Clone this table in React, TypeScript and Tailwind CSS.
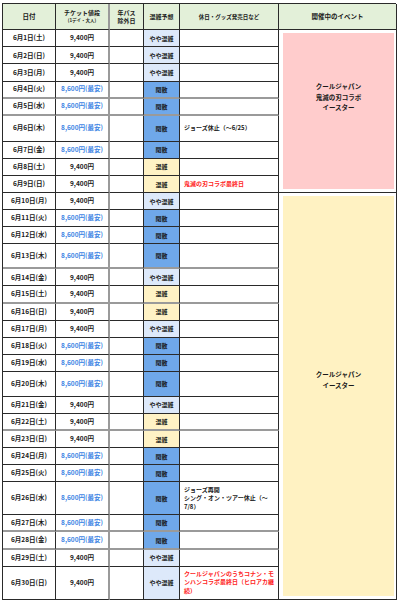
type Crowd = "ya" | "kan" | "kon";

type Day = {
  date: string;
  cheap: boolean;
  crowd: Crowd;
  note?: string[];
  red?: boolean;
  gray?: boolean;
};

const days: Day[] = [
  { date: "6月1日(土)", cheap: false, crowd: "ya" },
  { date: "6月2日(日)", cheap: false, crowd: "ya" },
  { date: "6月3日(月)", cheap: false, crowd: "ya" },
  { date: "6月4日(火)", cheap: true, crowd: "kan", gray: true },
  { date: "6月5日(水)", cheap: true, crowd: "kan", gray: true },
  { date: "6月6日(木)", cheap: true, crowd: "kan", note: ["ジョーズ休止（〜6/25）"] },
  { date: "6月7日(金)", cheap: true, crowd: "kan" },
  { date: "6月8日(土)", cheap: false, crowd: "kon" },
  { date: "6月9日(日)", cheap: false, crowd: "kon", note: ["鬼滅の刃コラボ最終日"], red: true },
  { date: "6月10日(月)", cheap: false, crowd: "ya" },
  { date: "6月11日(火)", cheap: true, crowd: "kan" },
  { date: "6月12日(水)", cheap: true, crowd: "kan" },
  { date: "6月13日(木)", cheap: true, crowd: "kan", gray: true },
  { date: "6月14日(金)", cheap: false, crowd: "ya" },
  { date: "6月15日(土)", cheap: false, crowd: "kon", gray: true },
  { date: "6月16日(日)", cheap: false, crowd: "kon" },
  { date: "6月17日(月)", cheap: false, crowd: "ya" },
  { date: "6月18日(火)", cheap: true, crowd: "kan" },
  { date: "6月19日(水)", cheap: true, crowd: "kan" },
  { date: "6月20日(木)", cheap: true, crowd: "kan" },
  { date: "6月21日(金)", cheap: false, crowd: "ya" },
  { date: "6月22日(土)", cheap: false, crowd: "kon", gray: true },
  { date: "6月23日(日)", cheap: false, crowd: "kon" },
  { date: "6月24日(月)", cheap: true, crowd: "kan" },
  { date: "6月25日(火)", cheap: true, crowd: "kan" },
  {
    date: "6月26日(水)",
    cheap: true,
    crowd: "kan",
    note: ["ジョーズ再開", "シング・オン・ツアー休止（〜", "7/8）"],
  },
  { date: "6月27日(木)", cheap: true, crowd: "kan", gray: true },
  { date: "6月28日(金)", cheap: true, crowd: "kan", gray: true },
  { date: "6月29日(土)", cheap: false, crowd: "ya" },
  {
    date: "6月30日(日)",
    cheap: false,
    crowd: "ya",
    note: ["クールジャパンのうちコナン・モ", "ンハンコラボ最終日（ヒロアカ継", "続）"],
    red: true,
  },
];

const crowdStyle: Record<Crowd, { label: string; cls: string }> = {
  ya: { label: "やや混雑", cls: "bg-[#dde9fa]" },
  kan: { label: "閑散", cls: "bg-[#6fa8ea]" },
  kon: { label: "混雑", cls: "bg-[#fff2c5]" },
};

function Row({ d }: { d: Day }) {
  const line = d.gray ? "border-b-2 border-b-[#9a9a9a]" : "border-b border-b-[#2a2a2a]";
  const crowd = crowdStyle[d.crowd];
  return (
    <>
      <div className={`flex items-center justify-center border-r border-r-[#2a2a2a] text-[6.5px] ${line}`}>
        {d.date}
      </div>
      <div
        className={`flex items-center justify-center border-r-2 border-r-[#9a9a9a] text-[6.5px] ${line} ${
          d.cheap ? "text-[#3f86e4]" : "text-[#1a1a1a]"
        }`}
      >
        {d.cheap ? "8,600円(最安)" : "9,400円"}
      </div>
      <div className={`border-r border-r-[#2a2a2a] ${line}`} />
      <div
        className={`flex items-center justify-center border-r border-r-[#2a2a2a] text-[6px] ${line} ${crowd.cls}`}
      >
        {crowd.label}
      </div>
      <div
        className={`flex flex-col justify-center border-r border-r-[#2a2a2a] pl-[4px] text-[6px] leading-[8.5px] ${line} ${
          d.red ? "text-[#ff2424]" : "text-[#1a1a1a]"
        }`}
      >
        {d.note?.map((t) => (
          <span key={t} className="whitespace-nowrap">
            {t}
          </span>
        ))}
      </div>
    </>
  );
}

export default function App() {
  return (
    <div className="h-[605px] w-[400px] bg-white pl-[2px] pt-[3px] font-['Noto_Sans_CJK_JP','Noto_Sans',sans-serif] font-bold text-[#1a1a1a]">
      <div className="grid w-[394px] grid-cols-[53px_54px_34px_36px_99px_118px] grid-rows-[26.3px_repeat(5,17.1px)_26px_repeat(6,17.1px)_25px_repeat(6,17.1px)_25px_repeat(5,17.1px)_33px_repeat(3,17.1px)_33px] border-l border-t border-[#2a2a2a]">
        {/* header */}
        <div className="flex items-center justify-center border-b border-r border-[#2a2a2a] bg-[#e3f0d9] text-[6.5px]">
          日付
        </div>
        <div className="flex flex-col items-center justify-center gap-[2px] border-b border-r-2 border-b-[#2a2a2a] border-r-[#9a9a9a] bg-[#e3f0d9] text-[6px] leading-none">
          <span>チケット値段</span>
          <span className="text-[4.5px]">(1デイ・大人)</span>
        </div>
        <div className="flex flex-col items-center justify-center border-b border-r border-[#2a2a2a] bg-[#e3f0d9] text-[6px] leading-[8px]">
          <span>年パス</span>
          <span>除外日</span>
        </div>
        <div className="flex items-center justify-center border-b border-r border-[#2a2a2a] bg-[#e3f0d9] text-[6px]">
          混雑予想
        </div>
        <div className="flex items-center justify-center border-b border-r border-[#2a2a2a] bg-[#e3f0d9] text-[5.5px]">
          休日・グッズ発売日など
        </div>
        <div className="flex items-center justify-center border-b border-r border-[#2a2a2a] bg-[#e3f0d9] text-[6.5px]">
          開催中のイベント
        </div>

        {/* event column */}
        <div className="col-start-6 row-span-9 row-start-2 border-b border-r border-[#2a2a2a] pb-[3px] pl-[4px] pr-[2px] pt-[3px]">
          <div className="flex h-full flex-col items-center justify-center bg-[#ffcccc] pb-[28px] text-[6.5px] leading-[10.5px]">
            <span>クールジャパン</span>
            <span>鬼滅の刃コラボ</span>
            <span>イースター</span>
          </div>
        </div>
        <div className="col-start-6 row-span-21 row-start-11 border-b border-r border-[#2a2a2a] pb-[3px] pl-[4px] pr-[2px] pt-[3px]">
          <div className="flex h-full flex-col items-center justify-center bg-[#fff2c2] pb-[32px] text-[6.5px] leading-[10.5px]">
            <span>クールジャパン</span>
            <span>イースター</span>
          </div>
        </div>

        {days.map((d) => (
          <Row key={d.date} d={d} />
        ))}
      </div>
    </div>
  );
}
